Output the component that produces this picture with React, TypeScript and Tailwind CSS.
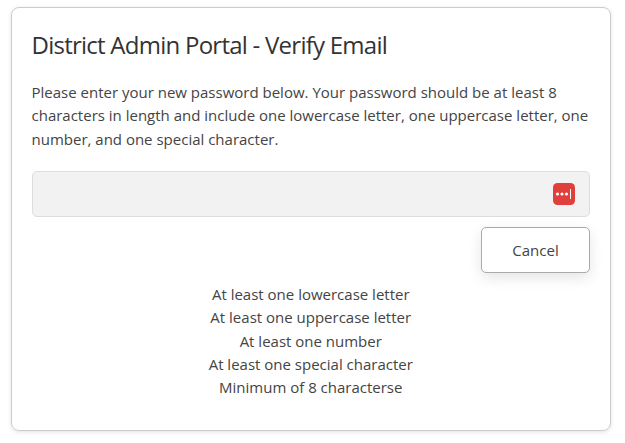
export default function App() {
  return (
    <div className="w-[625px] h-[443px] bg-white pl-[11px] pr-[14px] pt-[7px] pb-[12px] font-['Open_Sans',sans-serif] text-[#444]">
      <div className="h-[424px] border border-[#ccc] rounded-lg shadow-[0_1px_4px_rgba(0,0,0,0.12)] pl-[19.5px] pr-5 pt-[19px]">
        <h1 className="text-[24px] leading-[36px] tracking-[-0.75px] text-[#333]">District Admin Portal - Verify Email</h1>
        <p className="mt-[18px] text-[15px] leading-[23.4px]">Please enter your new password below. Your password should be at least 8 characters in length and include one lowercase letter, one uppercase letter, one number, and one special character.</p>
        <div className="mt-[20px] h-[46px] rounded-[5px] bg-[#f2f2f2] border border-[#ddd] flex items-center justify-end pr-[14px]">
          <svg width="22" height="22" viewBox="0 0 22 22"><rect width="22" height="22" rx="4.5" fill="#e13f3c"/><circle cx="4.5" cy="11" r="1.6" fill="#fff"/><circle cx="9" cy="11" r="1.6" fill="#fff"/><circle cx="13.5" cy="11" r="1.6" fill="#fff"/><rect x="17" y="6" width="1" height="10" fill="#fff"/></svg>
        </div>
        <div className="mt-[10px] flex justify-end">
          <button className="w-[109px] h-[46px] bg-white border border-[#aaa] rounded-[5px] text-[15px] shadow-[0_5px_14px_rgba(0,0,0,0.1)]">Cancel</button>
        </div>
        <div className="mt-[9.6px] text-center text-[15px] leading-[23.4px]">
          <div>At least one lowercase letter</div>
          <div>At least one uppercase letter</div>
          <div>At least one number</div>
          <div>At least one special character</div>
          <div>Minimum of 8 characterse</div>
        </div>
      </div>
    </div>
  );
}
